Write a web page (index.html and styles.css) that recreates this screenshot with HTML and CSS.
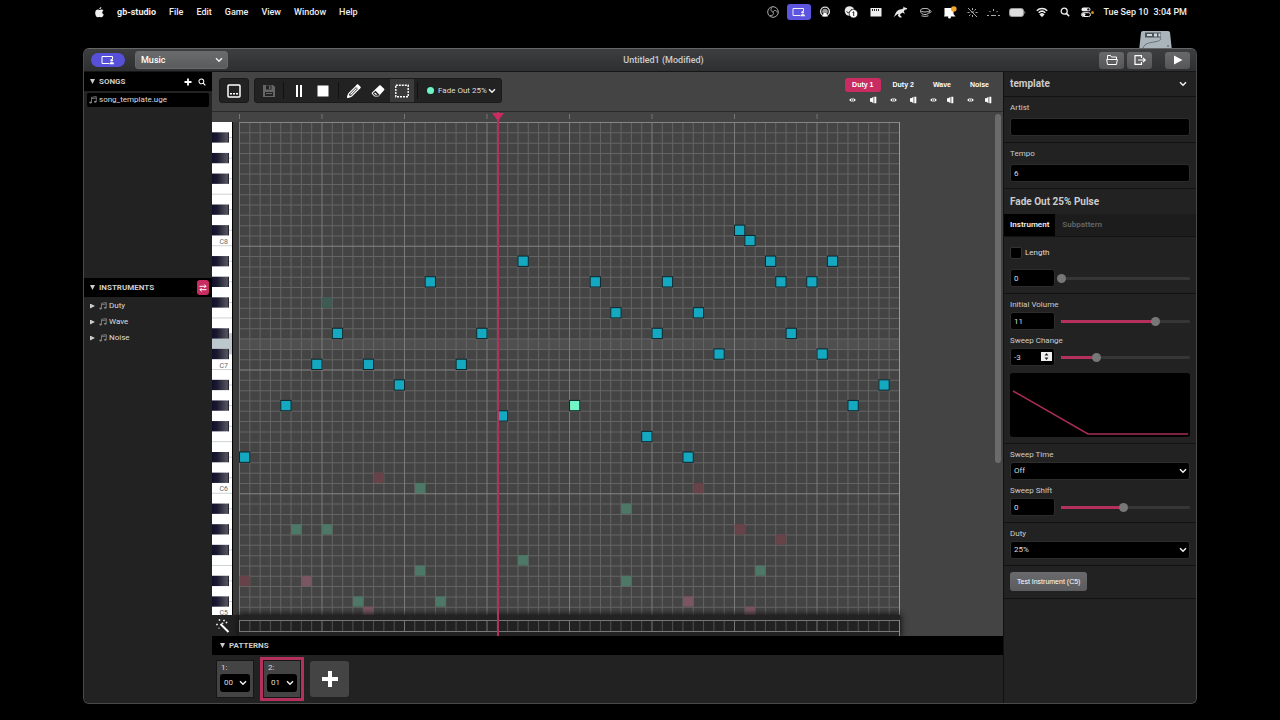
FILE: index.html
```html
<!DOCTYPE html>
<html lang="en">
<head>
    <meta charset="UTF-8">
    <meta name="viewport" content="width=device-width, initial-scale=1.0">
    <title>Untitled1 (Modified)</title>
    <link rel="stylesheet" href="styles.css">
</head>
<body>
    <svg class="sprite" aria-hidden="true">
        <symbol id="chevron" viewBox="0 0 8 6"><path d="M1 1.2l3 3 3-3" fill="none" stroke="currentColor" stroke-width="1.5"/></symbol>
        <symbol id="note" viewBox="0 0 8 8"><path d="M2.5 6.5V1.3L7.3.6v5M2.5 2.7l4.8-.7" fill="none" stroke="currentColor" stroke-width=".8"/><ellipse cx="1.6" cy="6.6" rx="1.3" ry="1" fill="currentColor"/><ellipse cx="6.3" cy="5.8" rx="1.3" ry="1" fill="currentColor"/></symbol>
        <symbol id="eye" viewBox="0 0 8 6"><path d="M.3 3C1.8.5 6.2.5 7.7 3 6.2 5.500 1.8 5.500.3 3z" fill="currentColor"/><circle cx="4" cy="3" r="1.600" fill="#444"/><circle cx="4" cy="3" r=".9" fill="currentColor"/></symbol>
        <symbol id="speaker" viewBox="0 0 8 8"><path d="M1 2.300h1.300L4.500.8v6.400L2.300 5.700H1zM5.300.8h2v6.400h-2z" fill="currentColor"/></symbol>
        <symbol id="screen" viewBox="0 0 14 10"><path d="M8 8.500H1v-7h10.500V4" fill="none" stroke="currentColor" stroke-width="1"/><circle cx="10.700" cy="5.200" r="1.300" fill="currentColor"/><path d="M8.300 9.200c0-3 4.800-3 4.800 0z" fill="currentColor"/></symbol>
        <symbol id="search" viewBox="0 0 10 10"><circle cx="4.200" cy="4.200" r="3" fill="none" stroke="currentColor" stroke-width="1.300"/><path d="M6.400 6.400l2.800 2.800" stroke="currentColor" stroke-width="1.500"/></symbol>
    </svg>

    <header class="menubar">
        <nav class="menus">
            <svg class="apple" viewBox="0 0 10 12"><path d="M7 0c0 1.500-1 2.500-2.200 2.500C4.700 1.300 5.800.2 7 0zM5 3.300c.6 0 1.100-.6 2.200-.6.9 0 1.700.5 2.100 1.100-1.900 1.100-1.600 3.700.4 4.500C9.200 9.800 8.200 11.400 7 11.400c-.8 0-1-.5-2-.5s-1.300.5-2 .5C1.600 11.400.2 8.900.2 6.600c0-2.500 1.500-3.800 3-3.800.8 0 1.300.5 1.800.5z" fill="currentColor"/></svg>
            <button class="menu app-name">gb-studio</button>
            <button class="menu">File</button>
            <button class="menu">Edit</button>
            <button class="menu">Game</button>
            <button class="menu">View</button>
            <button class="menu">Window</button>
            <button class="menu">Help</button>
        </nav>
        <div class="tray">
            <span class="cell wide"><svg width="12" height="12" viewBox="0 0 12 12" fill="none" stroke="#aaa"><circle cx="6" cy="6" r="5.300"/><path d="M6 6C3.500 5.500 3.500 3 5 1.500M6 6c1-2.300 3.800-2 4.300.5M6 6c1.500 2-.5 4-3 3.500"/></svg></span>
            <span class="cell wide"><span class="sharing"><svg width="14" height="10"><use href="#screen"/></svg></span></span>
            <span class="cell wide"><svg width="12" height="12" viewBox="0 0 12 12"><circle cx="6" cy="5.500" r="4.400" fill="none" stroke="#ddd" stroke-width="1.400"/><circle cx="6" cy="5.500" r="2.800" fill="#999"/><path d="M3 10.500L5 7h2l2 3.500z" fill="#fff"/></svg></span>
            <span class="cell wide"><svg width="14" height="12" viewBox="0 0 14 12"><circle cx="5.500" cy="5" r="4.800" fill="#e8e8e8"/><path d="M2.500 5.500l2 1.500L8 3" fill="none" stroke="#222"/><circle cx="9.500" cy="7.700" r="4.200" fill="#fff" stroke="#000" stroke-width=".6"/><path d="M8.500 6.500l1.200-.8v4.300" fill="none" stroke="#222"/></svg></span>
            <span class="cell"><svg width="12" height="10" viewBox="0 0 12 10"><path d="M.5 1h11v8.500H.5z" fill="#eee"/><path d="M2.500 2v2M4.500 2v2M6.500 2v2M8.500 2v2" stroke="#222"/></svg></span>
            <span class="cell"><svg width="15" height="12" viewBox="0 0 15 12"><path d="M.3 11.300C2.500 9 2.500 5.500 5.500 4c2-.9 3.500-.5 4.800-1.800L10.500.5l1.200 1 2.500.8-.6 1.200-1.900.3-.9 2 1 1.500-.6.5-1.400-1.300L8 7.500 6.800 9l1.800 1.800v.7H6.800L4.800 9.800l.7-1.700C4 8 2.500 10 .3 11.300z" fill="#e8e8e8"/></svg></span>
            <span class="cell wide"><svg width="13" height="10" viewBox="0 0 13 10" fill="none" stroke="#bbb"><ellipse cx="6" cy="3.200" rx="4.500" ry="1.800"/><path d="M1.500 3.500c0 3 2 4 4.500 4s4.500-1 4.500-4M10.500 3.500c2.500-.2 2 2.500-.8 2.500M2.500 8.800c2 .7 5 .7 7 0"/></svg></span>
            <span class="cell"><svg width="14" height="13" viewBox="0 0 14 13"><path d="M1.500 2h9v6l2 2.500H1L1.500 9z" fill="#fff"/><circle cx="6.500" cy="11" r="1.500" fill="#fff"/><circle cx="10.800" cy="3" r="2.800" fill="#f5a623"/></svg></span>
            <span class="cell narrow"><svg width="11" height="11" viewBox="0 0 11 11" stroke="#aaa"><path d="M5.500 1v2M5.500 8v2M.5 5.500h2M8.500 5.500h2M2 9l1.500-1.500M9 2L7.500 3.500M1 1l9 9M4 5h3"/></svg></span>
            <span class="cell narrow"><svg width="13" height="9" viewBox="0 0 13 9" stroke="#aaa"><path d="M6.500 1v2M2.500 3l1 1.200M10.500 3l-1 1.200M0 7.500h2M11 7.500h2M4 7.500h5"/></svg></span>
            <span class="cell wide"><svg width="17" height="9" viewBox="0 0 17 9"><rect x=".5" y=".5" width="14" height="8" rx="2.300" fill="#ddd" stroke="#999"/><path d="M15.500 3v3c1-.3 1-2.700 0-3z" fill="#bbb"/></svg></span>
            <span class="cell"><svg width="12" height="10" viewBox="0 0 12 10" fill="none" stroke="#eee" stroke-width="1.500"><path d="M.8 3.700c3-3 7.400-3 10.400 0M2.700 5.700c2-1.900 4.600-1.900 6.600 0M4.500 7.500c1-.9 2-.9 3 0L6 9z"/></svg></span>
            <span class="cell narrow"><svg width="10" height="10"><use href="#search"/></svg></span>
            <span class="cell narrow"><svg width="10" height="10" viewBox="0 0 10 10"><rect x=".5" y=".5" width="9" height="3.800" rx="1.900" fill="#eee"/><circle cx="7.400" cy="2.400" r="1.200" fill="#222"/><rect x=".5" y="5.700" width="9" height="3.800" rx="1.900" fill="none" stroke="#eee"/><circle cx="2.700" cy="7.600" r="1.700" fill="#eee"/></svg></span>
            <span class="mic-dot"></span>
            <span class="clock"><span>Tue Sep 10</span><span>3:04 PM</span></span>
        </div>
    </header>

    <div class="desktop">
        <svg class="drive" viewBox="0 0 34 20"><path d="M2 1.500Q2 0 4 0h25q2 0 2 1.500L33 20H0z" fill="#a9b4bb"/><path d="M6 1.500h16v5H6z" fill="#4b545b"/><path d="M8 3h5v2H8zM15 2.500h3v3h-3zM19.500 2.500h2v3h-2z" fill="#cfd6da"/><path d="M4 17c2-5 6-5 11-6s6-1 7-4" fill="none" stroke="#56616a" stroke-width=".8"/><circle cx="29" cy="15" r="1" fill="#6b757c"/></svg>

        <div class="window">
            <div class="titlebar">
                <button class="share-pill" aria-label="Screen sharing"><svg width="14" height="10"><use href="#screen"/></svg></button>
                <span class="select-wrap section-select">
                    <select aria-label="Section"><option>Music</option></select>
                    <svg class="chevron"><use href="#chevron"/></svg>
                </span>
                <h1 class="title">Untitled1 (Modified)</h1>
                <div class="title-actions">
                    <button class="title-button" aria-label="Open folder"><svg width="12" height="10" viewBox="0 0 12 10" fill="none" stroke="currentColor"><path d="M1.500 4.500v-4h3l1 1.500h5v2.500M.7 4.500h10.600L10.500 9.500h-9z"/></svg></button>
                    <button class="title-button" aria-label="Export"><svg width="12" height="10" viewBox="0 0 12 10" fill="none" stroke="currentColor" stroke-width="1.200"><path d="M7.500 3V.7H1v8.600h6.500V7M4 5h7M9 2.800L11.200 5 9 7.200"/></svg></button>
                    <button class="title-button play" aria-label="Run"><svg width="10" height="10" viewBox="0 0 10 10"><path d="M1 .5L9.500 5 1 9.500z" fill="currentColor"/></svg></button>
                </div>
            </div>

            <div class="workspace">
                <aside class="sidebar">
                    <section class="songs">
                        <h2 class="pane-header">
                            <span class="arrow down"></span>SONGS
                            <button class="icon-button push" aria-label="Add song"><svg width="8" height="8" viewBox="0 0 8 8"><path d="M4 .5v7M.5 4h7" stroke="currentColor" stroke-width="1.800"/></svg></button>
                            <button class="icon-button" aria-label="Search"><svg width="8" height="8" viewBox="0 0 10 10"><use href="#search"/></svg></button>
                        </h2>
                        <a class="song" href="#"><svg width="8" height="8"><use href="#note"/></svg>song_template.uge</a>
                    </section>
                    <section>
                        <h2 class="pane-header">
                            <span class="arrow down"></span>INSTRUMENTS
                            <button class="swap push" aria-label="Swap"><svg width="8" height="8" viewBox="0 0 8 8" fill="none" stroke="currentColor"><path d="M.5 2.300h6.500M5.300.5L7 2.300 5.300 4M7.500 5.700H1M2.700 4L1 5.700l1.700 1.800"/></svg></button>
                        </h2>
                        <ul class="instruments">
                            <li><span class="arrow"></span><svg width="8" height="8"><use href="#note"/></svg>Duty</li>
                            <li><span class="arrow"></span><svg width="8" height="8"><use href="#note"/></svg>Wave</li>
                            <li><span class="arrow"></span><svg width="8" height="8"><use href="#note"/></svg>Noise</li>
                        </ul>
                    </section>
                </aside>

                <main class="editor">
                    <div class="toolbar">
                        <div class="tool-group">
                            <button class="tool view" aria-label="Tracker view"><svg width="14" height="14" viewBox="0 0 14 14"><rect x="1" y="1" width="12" height="12" rx="1" fill="none" stroke="currentColor" stroke-width="1.500"/><path d="M3 9h2v1.500H3zM6 9h2v1.500H6zM9 9h2v1.500H9z" fill="currentColor"/></svg></button>
                        </div>
                        <div class="tool-group">
                            <button class="tool save" aria-label="Save" disabled><svg width="14" height="14" viewBox="0 0 14 14"><path d="M1 1h10l2 2v10H1z" fill="currentColor"/><path d="M4 1.500h5.500v4H4zM3 8h8v4H3z" fill="#222"/><path d="M7 2h1.500v3H7zM4 9h6v1H4z" fill="currentColor"/></svg></button>
                            <span class="divider"></span>
                            <button class="tool" aria-label="Pause"><svg width="14" height="14" viewBox="0 0 14 14"><path d="M4 1h2v12H4zM8 1h2v12H8z" fill="currentColor"/></svg></button>
                            <button class="tool" aria-label="Stop"><svg width="14" height="14" viewBox="0 0 14 14"><path d="M1.500 1.500h11v11h-11z" fill="currentColor"/></svg></button>
                            <span class="divider"></span>
                            <button class="tool" aria-label="Draw"><svg width="14" height="14" viewBox="0 0 14 14" fill="none" stroke="currentColor" stroke-width="1.200"><path d="M.8 13.200l1-3.700 8-8 2.700 2.700-8 8z"/><path d="M9 2.300L11.700 5M3.500 10.500l6-6"/><path d="M.8 13.200l.5-2 1.500 1.500zM9.800 1.500l.9-.7 2.500 2.500-.7.9z" fill="currentColor"/></svg></button>
                            <button class="tool" aria-label="Erase"><svg width="14" height="14" viewBox="0 0 14 14"><path d="M8.500 1.200h1L13.300 5v1L7.500 12.500h-4L.8 9.800v-1z" fill="currentColor"/><path d="M4.500 6.800l4 4-1 1H4L2 9.800v-.7z" fill="#222"/><path d="M4 8.500l2.500 2.300h-2L3.200 9.500z" fill="currentColor"/></svg></button>
                            <button class="tool active" aria-label="Select"><svg width="14" height="14" viewBox="0 0 14 14"><rect x=".8" y="1.300" width="12.400" height="11.400" fill="none" stroke="currentColor" stroke-width="1.400" stroke-dasharray="2 1"/></svg></button>
                            <span class="divider"></span>
                            <span class="select-wrap instrument-select">
                                <span class="swatch"></span>
                                <select aria-label="Instrument"><option>Fade Out 25% Pulse</option></select>
                                <svg class="chevron"><use href="#chevron"/></svg>
                            </span>
                        </div>
                        <div class="channels">
                            <div class="channel">
                                <button class="channel-name active">Duty 1</button>
                                <div class="channel-icons"><svg width="7" height="6"><use href="#eye"/></svg><svg width="8" height="8"><use href="#speaker"/></svg></div>
                            </div>
                            <div class="channel">
                                <button class="channel-name">Duty 2</button>
                                <div class="channel-icons"><svg width="7" height="6"><use href="#eye"/></svg><svg width="8" height="8"><use href="#speaker"/></svg></div>
                            </div>
                            <div class="channel">
                                <button class="channel-name">Wave</button>
                                <div class="channel-icons"><svg width="7" height="6"><use href="#eye"/></svg><svg width="8" height="8"><use href="#speaker"/></svg></div>
                            </div>
                            <div class="channel">
                                <button class="channel-name">Noise</button>
                                <div class="channel-icons"><svg width="7" height="6"><use href="#eye"/></svg><svg width="8" height="8"><use href="#speaker"/></svg></div>
                            </div>
                        </div>
                    </div>

                    <div class="roll">
                        <div class="piano-column">
                            <div class="ruler"></div>
                            <div class="clip"><svg class="piano" id="piano" viewBox="0 0 20 495"></svg></div>
                            <div class="effects"><svg width="14" height="14" viewBox="0 0 14 14"><path d="M4.500 5l8 8" stroke="#fff" stroke-width="2"/><path d="M3.500 0v2M2.500 1h2M8 .5v2M7 1.500h2M1 4.500v2M0 5.500h2M6.500 3.500v1.500M5.500 4.300h2M10.500 2.500v2M9.500 3.500h2M3 8.500v1.500" stroke="#ddd" stroke-width=".9"/></svg></div>
                        </div>
                        <div class="sheet">
                            <div class="ruler"><svg class="ticks" id="ticks" viewBox="0 0 661 11"></svg></div>
                            <div class="clip"><svg class="grid" id="grid" viewBox="0 0 640 480"></svg></div>
                            <div class="effects"><svg class="effect-cells" id="effects" viewBox="0 0 661 16"></svg></div>
                            <div class="playhead" id="playhead"></div>
                        </div>
                        <div class="scrollbar"></div>
                    </div>

                    <section class="patterns">
                        <h2 class="pane-header"><span class="arrow down"></span>PATTERNS</h2>
                        <div class="pattern-list">
                            <div class="pattern">
                                <label for="pattern1">1:</label>
                                <span class="select-wrap">
                                    <select id="pattern1"><option>00</option></select>
                                    <svg class="chevron"><use href="#chevron"/></svg>
                                </span>
                            </div>
                            <div class="pattern active">
                                <label for="pattern2">2:</label>
                                <span class="select-wrap">
                                    <select id="pattern2"><option>01</option></select>
                                    <svg class="chevron"><use href="#chevron"/></svg>
                                </span>
                            </div>
                            <button class="add-pattern" aria-label="Add pattern"><svg width="16" height="16" viewBox="0 0 16 16"><path d="M8 0v16M0 8h16" stroke="currentColor" stroke-width="4"/></svg></button>
                        </div>
                    </section>
                </main>

                <aside class="properties">
                    <div class="prop-header">
                        <h2>template</h2>
                        <svg class="chevron"><use href="#chevron"/></svg>
                    </div>
                    <div class="group song-group">
                        <label for="artist">Artist</label>
                        <input class="field" id="artist" type="text">
                    </div>
                    <div class="group song-group">
                        <label for="tempo">Tempo</label>
                        <input class="field" id="tempo" type="text" value="6">
                    </div>
                    <div class="prop-header plain"><h2>Fade Out 25% Pulse</h2></div>
                    <div class="tabs">
                        <button class="tab active">Instrument</button>
                        <button class="tab">Subpattern</button>
                    </div>
                    <div class="group">
                        <div class="check-row">
                            <input type="checkbox" id="useLength">
                            <label for="useLength">Length</label>
                        </div>
                        <div class="slider-row">
                            <input class="field" type="text" value="0" aria-label="Length value">
                            <input type="range" min="0" max="63" value="0" aria-label="Length slider">
                        </div>
                    </div>
                    <div class="group">
                        <label for="volume">Initial Volume</label>
                        <div class="slider-row">
                            <input class="field" id="volume" type="text" value="11">
                            <input type="range" min="0" max="15" value="11.4" step="any" aria-label="Initial Volume slider">
                        </div>
                        <label class="next" for="sweepChange">Sweep Change</label>
                        <div class="slider-row">
                            <span class="spin-wrap">
                                <input class="field" id="sweepChange" type="text" value="-3">
                                <svg class="spinner" viewBox="0 0 11 9"><path d="M0 0h11v9H0z" fill="#eee"/><path d="M3.500 3.500L5.500 1l2 2.500zM3.500 5.500l2 2.500 2-2.500z" fill="#222"/></svg>
                            </span>
                            <input type="range" min="-7" max="7" value="-3" aria-label="Sweep Change slider">
                        </div>
                        <svg class="envelope" viewBox="0 0 180 64" preserveAspectRatio="none"><path d="M3 18l75 43h100" fill="none" stroke="#a82c54" stroke-width="1.500"/></svg>
                    </div>
                    <div class="group">
                        <label for="sweepTime">Sweep Time</label>
                        <span class="select-wrap">
                            <select class="field" id="sweepTime"><option>Off</option></select>
                            <svg class="chevron"><use href="#chevron"/></svg>
                        </span>
                        <label class="next" for="sweepShift">Sweep Shift</label>
                        <div class="slider-row">
                            <input class="field" id="sweepShift" type="text" value="0">
                            <input type="range" min="-7" max="7" value="0" aria-label="Sweep Shift slider">
                        </div>
                    </div>
                    <div class="group">
                        <label for="duty">Duty</label>
                        <span class="select-wrap">
                            <select class="field" id="duty"><option>25%</option></select>
                            <svg class="chevron"><use href="#chevron"/></svg>
                        </span>
                    </div>
                    <div class="group">
                        <button class="test">Test Instrument (C5)</button>
                    </div>
                </aside>
            </div>
        </div>
    </div>

    <script src="script.js"></script>
</body>
</html>
```
FILE: styles.css
```css
* {
    box-sizing: border-box;
}
body {
    margin: 0;
    min-height: 100vh;
    padding: 0 83px 16px;
    display: flex;
    flex-direction: column;
    background: #000;
    color: #ddd;
    font-family: Roboto, "Liberation Sans", sans-serif;
    font-size: 8px;
    line-height: 12px;
}
button, input, select {
    font: inherit;
    color: inherit;
    margin: 0;
}
button {
    border: none;
    background: none;
    padding: 0;
    display: flex;
    align-items: center;
    justify-content: center;
}
svg {
    display: block;
    flex: none;
}
h1, h2, ul {
    margin: 0;
    padding: 0;
    font-size: inherit;
}
.sprite {
    position: absolute;
    width: 0;
    height: 0;
}

/* menu bar */
.menubar {
    height: 24px;
    display: flex;
    align-items: center;
    justify-content: space-between;
    padding: 0 10px 0 12px;
    font-size: 9px;
    color: #eee;
}
.menus {
    display: flex;
    align-items: center;
    gap: 13px;
}
.apple {
    width: 9px;
    height: 11px;
}
.menu {
    font-weight: 500;
}
.app-name {
    font-weight: 700;
}
.tray {
    display: flex;
    align-items: center;
}
.cell {
    width: 24px;
    display: flex;
    justify-content: center;
}
.cell.wide {
    width: 26px;
}
.cell.narrow {
    width: 21px;
}
.sharing {
    background: #5d55e0;
    border-radius: 3px;
    padding: 3px 5px;
}
.mic-dot {
    width: 3px;
    height: 3px;
    border-radius: 50%;
    background: #d08a10;
    margin: 0 9px 0 -5px;
}
.clock {
    display: flex;
    gap: 5px;
    font-weight: 500;
}

.desktop {
    position: relative;
    flex: 1;
    padding-top: 24px;
    display: flex;
}
.drive {
    position: absolute;
    top: 7px;
    right: 24px;
    width: 34px;
    height: 20px;
}
.window {
    position: relative;
    flex: 1;
    min-width: 0;
    display: flex;
    flex-direction: column;
    background: #222;
    border: 1px solid #4a4a4a;
    border-top-color: #666;
    border-radius: 6px;
    overflow: hidden;
}

/* title bar */
.titlebar {
    height: 23px;
    display: flex;
    align-items: center;
    padding: 0 6px 0 7px;
    background: linear-gradient(#3d3e40, #2e2f31);
    border-bottom: 1px solid #161616;
}
.share-pill {
    width: 34px;
    height: 14px;
    border-radius: 7px;
    background: #5750d8;
    color: #fff;
    margin-right: 10px;
}
.select-wrap {
    position: relative;
    display: flex;
    align-items: center;
}
.select-wrap select {
    appearance: none;
    width: 100%;
    border: none;
    background: none;
}
.chevron {
    width: 8px;
    height: 6px;
    color: #eee;
}
.select-wrap .chevron {
    position: absolute;
    right: 3px;
    pointer-events: none;
}
.section-select {
    width: 93px;
}
.section-select select {
    height: 18px;
    padding: 0 5px;
    border-radius: 3px;
    border: 1px solid #6a6a6c;
    background: linear-gradient(#6a6b6d, #5a5b5d);
    color: #fff;
    font-size: 9px;
    font-weight: 500;
}
.section-select .chevron {
    right: 5px;
}
.title {
    flex: 1;
    text-align: center;
    font-size: 9px;
    font-weight: 500;
    color: #ccc;
}
.title-actions {
    display: flex;
    gap: 3px;
}
.title-button {
    width: 25px;
    height: 17px;
    border-radius: 3px;
    background: linear-gradient(#69696b, #565658);
    color: #fff;
}
.title-button.play {
    margin-left: 10px;
}

.workspace {
    flex: 1;
    min-height: 0;
    display: flex;
}

/* left sidebar */
.sidebar {
    width: 128px;
    display: flex;
    flex-direction: column;
    background: #222;
}
.songs {
    height: 206px;
}
.pane-header {
    height: 19px;
    display: flex;
    align-items: center;
    background: #000;
    padding: 0 3px 0 6px;
    font-weight: 700;
    color: #ccc;
}
.arrow {
    width: 5px;
    height: 5px;
    margin-right: 5px;
    background: #ccc;
    clip-path: polygon(0 0, 100% 50%, 0 100%);
}
.arrow.down {
    clip-path: polygon(0 0, 100% 0, 50% 100%);
    margin-right: 4px;
}
.push {
    margin-left: auto;
}
.icon-button {
    width: 14px;
    height: 14px;
    color: #fff;
}
.swap {
    width: 12px;
    height: 15px;
    border-radius: 3px;
    background: #c92c61;
    color: #fff;
}
.song {
    display: flex;
    align-items: center;
    gap: 2px;
    height: 14px;
    margin: 2px 3px;
    padding: 0 2px;
    border-radius: 2px;
    background: #000;
    color: #ddd;
    text-decoration: none;
}
.song svg, .instruments svg {
    color: #888;
}
.instruments {
    list-style: none;
    padding: 1px 6px;
}
.instruments li {
    display: flex;
    align-items: center;
    gap: 2px;
    height: 16px;
}
.instruments .arrow {
    margin-right: 2px;
}

/* toolbar */
.editor {
    flex: 1;
    min-width: 0;
    display: flex;
    flex-direction: column;
    background: #444;
}
.toolbar {
    height: 40px;
    display: flex;
    align-items: center;
    gap: 5px;
    padding: 0 7px 2px;
    border-bottom: 1px solid #2b2b2b;
}
.tool-group {
    height: 25px;
    display: flex;
    align-items: center;
    background: #222;
    border: 1px solid #1a1a1a;
    border-radius: 3px;
}
.tool {
    width: 24px;
    height: 23px;
    color: #fff;
}
.tool.view, .tool.save {
    width: 28px;
}
.tool:disabled {
    color: #666;
}
.tool.active {
    background: #3b3b3b;
}
.divider {
    width: 1px;
    height: 17px;
    margin: 0 3px;
    background: #111;
}
.tool.save + .divider {
    margin-left: 0;
}
.instrument-select {
    width: 80px;
    padding-left: 6px;
    gap: 4px;
}
.instrument-select select {
    flex: 1;
    min-width: 0;
    padding: 0 14px 0 0;
}
.instrument-select .chevron {
    right: 5px;
}
.swatch {
    flex: none;
    width: 7px;
    height: 7px;
    border-radius: 50%;
    background: #6ff5c5;
}
.channels {
    display: flex;
    gap: 5px;
    margin-left: auto;
}
.channel-name, .test {
    font-family: "Liberation Sans", Arial, sans-serif;
    font-size: 7px;
}
.channel-name {
    height: 14px;
    padding: 0 7px;
    border-radius: 3px;
    font-weight: 700;
    color: #fff;
}
.channel-name.active {
    background: #c92c61;
}
.channel-icons {
    display: flex;
    align-items: center;
    justify-content: space-between;
    height: 8px;
    padding: 0 4px;
    margin-top: 4px;
    color: #fff;
}

/* piano roll */
.roll {
    position: relative;
    flex: 1;
    min-height: 0;
    display: flex;
    overflow: hidden;
}
.piano-column {
    width: 27px;
    display: flex;
    flex-direction: column;
    background: #3a3a3a;
}
.ruler {
    height: 10px;
    background: #444;
}
.ticks {
    width: 661px;
    height: 11px;
}
.clip {
    flex: 1;
    min-height: 0;
    overflow: hidden;
    position: relative;
}
.piano {
    width: 20px;
    height: 495px;
    box-shadow: 1px 0 0 #000;
    position: absolute;
}
.piano text {
    font-size: 7px;
    fill: #666;
}
.sheet {
    position: relative;
    width: 661px;
    display: flex;
    flex-direction: column;
}
.grid {
    position: absolute;
    width: 660px;
    height: 495px;
    overflow: visible;
}
.effects {
    position: relative;
    height: 21px;
    display: flex;
    align-items: center;
    padding-left: 4px;
    background: #222;
    box-shadow: 0 0 6px 1px #111;
}
.sheet .effects {
    padding: 5px 0 0;
}
.piano-column .effects {
    box-shadow: none;
}
.effect-cells {
    width: 661px;
    height: 16px;
    overflow: visible;
}
.playhead {
    position: absolute;
    top: 0;
    bottom: 0;
    width: 2px;
    background: #b5315d;
}
.playhead::before {
    content: "";
    position: absolute;
    left: -5px;
    top: 1px;
    border: 6px solid transparent;
    border-top: 8px solid #c92c61;
    border-bottom: none;
}
.scrollbar {
    position: absolute;
    top: 2px;
    right: 2px;
    width: 6px;
    height: 70%;
    max-height: 349px;
    border-radius: 3px;
    background: #6b6b6b;
}

/* patterns */
.patterns {
    background: #222;
}
.patterns .pane-header {
    padding-left: 8px;
}
.pattern-list {
    display: flex;
    align-items: center;
    gap: 6px;
    height: 48px;
    padding: 0 4px;
}
.pattern {
    width: 38px;
    height: 38px;
    padding: 1px 3px;
    background: #444;
    border: 1px solid #161616;
}
.pattern label {
    display: block;
    padding-left: 1px;
}
.pattern select {
    height: 18px;
    padding: 0 4px;
    border-radius: 3px;
    background: #000;
}
.pattern.active {
    outline: 3px solid #b5315d;
    margin: 0 3px;
}
.add-pattern {
    width: 39px;
    height: 36px;
    border-radius: 3px;
    background: #444;
    color: #fff;
}

/* right column */
.properties {
    width: 193px;
    background: #222;
    border-left: 1px solid #111;
}
.prop-header {
    height: 25px;
    display: flex;
    align-items: center;
    justify-content: space-between;
    padding: 0 9px 0 6px;
    border-bottom: 1px solid #111;
    font-size: 10px;
    color: #ccc;
}
.prop-header.plain {
    border: none;
}
.group {
    padding: 5px 6px 6px;
    border-bottom: 1px solid #111;
}
.group > label {
    display: block;
    margin-bottom: 1px;
    color: #ccc;
}
.group > label.next {
    margin-top: 5px;
}
.song-group > label {
    margin-bottom: 4px;
}
.field, .select-wrap select.field {
    display: block;
    width: 100%;
    height: 18px;
    padding: 0 3px;
    border: 1px solid #2d2d2d;
    border-radius: 3px;
    background: #000;
    color: #ddd;
}
.tabs {
    display: flex;
    height: 23px;
    background: #1c1c1c;
    border-bottom: 1px solid #111;
}
.tab {
    padding: 0 7px;
    font-weight: 600;
    color: #666;
}
.tab.active {
    padding: 0 6px;
    background: #000;
    color: #eee;
}
.check-row {
    display: flex;
    align-items: center;
    gap: 3px;
    height: 22px;
    margin-bottom: 5px;
}
.check-row input {
    appearance: none;
    width: 12px;
    height: 12px;
    border: 1px solid #333;
    border-radius: 2px;
    background: #000;
}
.slider-row {
    display: flex;
    align-items: center;
    gap: 2px;
}
.slider-row .field {
    width: 45px;
    flex: none;
}
.spin-wrap {
    position: relative;
}
.spinner {
    position: absolute;
    top: 4px;
    right: 3px;
    width: 11px;
    height: 9px;
}
input[type="range"] {
    appearance: none;
    flex: 1;
    min-width: 0;
    height: 9px;
    background: none;
}
input[type="range"]::-webkit-slider-runnable-track {
    height: 3px;
    border-radius: 2px;
    background: linear-gradient(to right, transparent 4px, #b5315d 4px, #b5315d var(--fill), #363636 var(--fill));
}
input[type="range"]::-webkit-slider-thumb {
    appearance: none;
    width: 9px;
    height: 9px;
    margin-top: -3px;
    border-radius: 50%;
    background: #777;
}
.envelope {
    width: 100%;
    height: 64px;
    margin-top: 7px;
    border-radius: 3px;
    background: #000;
}
.test {
    height: 19px;
    margin: 1px 0;
    padding: 0 7px;
    border-radius: 3px;
    background: linear-gradient(#6a6a6c, #5c5c5e);
    color: #fff;
}
```
FILE: script.js
```javascript
const SVG_NS = 'http://www.w3.org/2000/svg';
const COLS = 64;
const ROWS = 48;
const CELL = 10;
const SHEET_WIDTH = 660;
const PIANO_HEIGHT = 495;
const playPosition = 25;
const hoverRow = 21;

// [column, row] from the top left of the sheet
const notes = [
    [0, 32], [4, 27], [7, 23], [9, 20], [12, 23], [15, 25], [18, 15], [21, 23], [23, 20],
    [25, 28], [27, 13], [34, 15], [36, 18], [39, 30], [40, 20], [41, 15], [43, 32], [44, 18],
    [46, 22], [48, 10], [49, 11], [51, 13], [52, 15], [53, 20], [55, 15], [56, 22], [57, 13],
    [59, 27], [62, 25]
];
const selected = [[32, 27]];
const greenGhosts = [[17, 35], [5, 39], [8, 39], [27, 42], [17, 43], [11, 46], [19, 46], [37, 37], [37, 44], [50, 43]];
const faintGhosts = [[8, 17]];
const redGhosts = [[13, 34], [0, 44], [44, 35], [48, 39], [52, 40]];
const pinkGhosts = [[6, 44], [12, 47], [43, 46], [49, 47]];

function add(parent, name, attrs) {
    const el = document.createElementNS(SVG_NS, name);
    for (const key in attrs) el.setAttribute(key, attrs[key]);
    parent.appendChild(el);
    return el;
}

function line(parent, x1, y1, x2, y2, stroke) {
    add(parent, 'line', { x1, y1, x2, y2, stroke, 'stroke-width': 1 });
}

function drawNotes(grid, list, fill, stroke) {
    for (const [col, row] of list) {
        add(grid, 'rect', {
            x: col * CELL + 0.5, y: row * CELL, width: CELL, height: CELL, fill, stroke
        });
    }
}

function drawGrid() {
    const grid = document.getElementById('grid');
    add(grid, 'rect', { x: 0, y: hoverRow * CELL, width: 640, height: CELL, fill: '#4f4f4f' });
    for (let r = 0; r <= ROWS; r++) {
        if (r % 12) line(grid, 0, r * CELL + 0.5, 640, r * CELL + 0.5, '#646464');
    }
    for (let c = 0; c <= COLS; c++) {
        line(grid, c * CELL + 0.5, 0, c * CELL + 0.5, 480, c % 8 ? '#646464' : '#7a7a7a');
    }
    for (let r = 0; r <= ROWS; r += 12) line(grid, 0, r * CELL + 0.5, 640, r * CELL + 0.5, '#858585');
    line(grid, 640.5, 0, 640.5, 480, '#999');
    drawNotes(grid, faintGhosts, '#3d5b53', 'none');
    drawNotes(grid, greenGhosts, '#4d7766', 'none');
    drawNotes(grid, redGhosts, '#684249', 'none');
    drawNotes(grid, pinkGhosts, '#795662', 'none');
    drawNotes(grid, notes, '#14a9c0', '#10282d');
    drawNotes(grid, selected, '#72f6c6', '#10282d');
}

function drawPiano() {
    const piano = document.getElementById('piano');
    const row = PIANO_HEIGHT / ROWS;
    const defs = add(piano, 'linearGradient', { id: 'key' });
    add(defs, 'stop', { offset: 0, 'stop-color': '#11102a' });
    add(defs, 'stop', { offset: 0.3, 'stop-color': '#1a1930' });
    add(defs, 'stop', { offset: 0.9, 'stop-color': '#555560' });
    add(defs, 'stop', { offset: 1, 'stop-color': '#15151c' });
    add(piano, 'rect', { width: 20, height: PIANO_HEIGHT, fill: '#fff' });
    add(piano, 'rect', { y: 20.5 * row, width: 20, height: 2 * row, fill: '#bcc8cc' });
    for (let octave = 0; octave < 4; octave++) {
        const top = octave * 12;
        for (const edge of [1.5, 3.5, 5.5, 7, 8.5, 10.5, 12]) {
            line(piano, 0, (top + edge) * row, 20, (top + edge) * row, '#ccd2d6');
        }
        for (const key of [1, 3, 5, 8, 10]) {
            add(piano, 'rect', { x: 0, y: (top + key) * row, width: 17, height: row, fill: 'url(#key)' });
        }
        const label = add(piano, 'text', { x: 16, y: (top + 12) * row - 2, 'text-anchor': 'end' });
        label.textContent = 'C' + (8 - octave);
    }
}

function drawStrips() {
    const ticks = document.getElementById('ticks');
    const effects = document.getElementById('effects');
    const cell = SHEET_WIDTH / COLS;
    for (let c = 0; c < COLS; c += 8) line(ticks, c * cell + 0.5, 2, c * cell + 0.5, 7, '#777');
    for (let c = 0; c <= COLS; c++) {
        line(effects, c * cell + 0.5, 0, c * cell + 0.5, 11, c % 8 ? '#505050' : '#757575');
    }
    line(effects, 0, 0.5, SHEET_WIDTH, 0.5, '#777');
    line(effects, 0, 11.5, SHEET_WIDTH, 11.5, '#777');
    line(effects, SHEET_WIDTH + 0.5, 0, SHEET_WIDTH + 0.5, 16, '#888');
}

document.querySelectorAll('input[type="range"]').forEach(input => {
    const paint = () => {
        const percent = (input.value - input.min) / (input.max - input.min) * 100;
        input.style.setProperty('--fill', percent + '%');
    };
    input.addEventListener('input', paint);
    paint();
});

drawGrid();
drawPiano();
drawStrips();
document.getElementById('playhead').style.left = playPosition / COLS * 100 + '%';
```
